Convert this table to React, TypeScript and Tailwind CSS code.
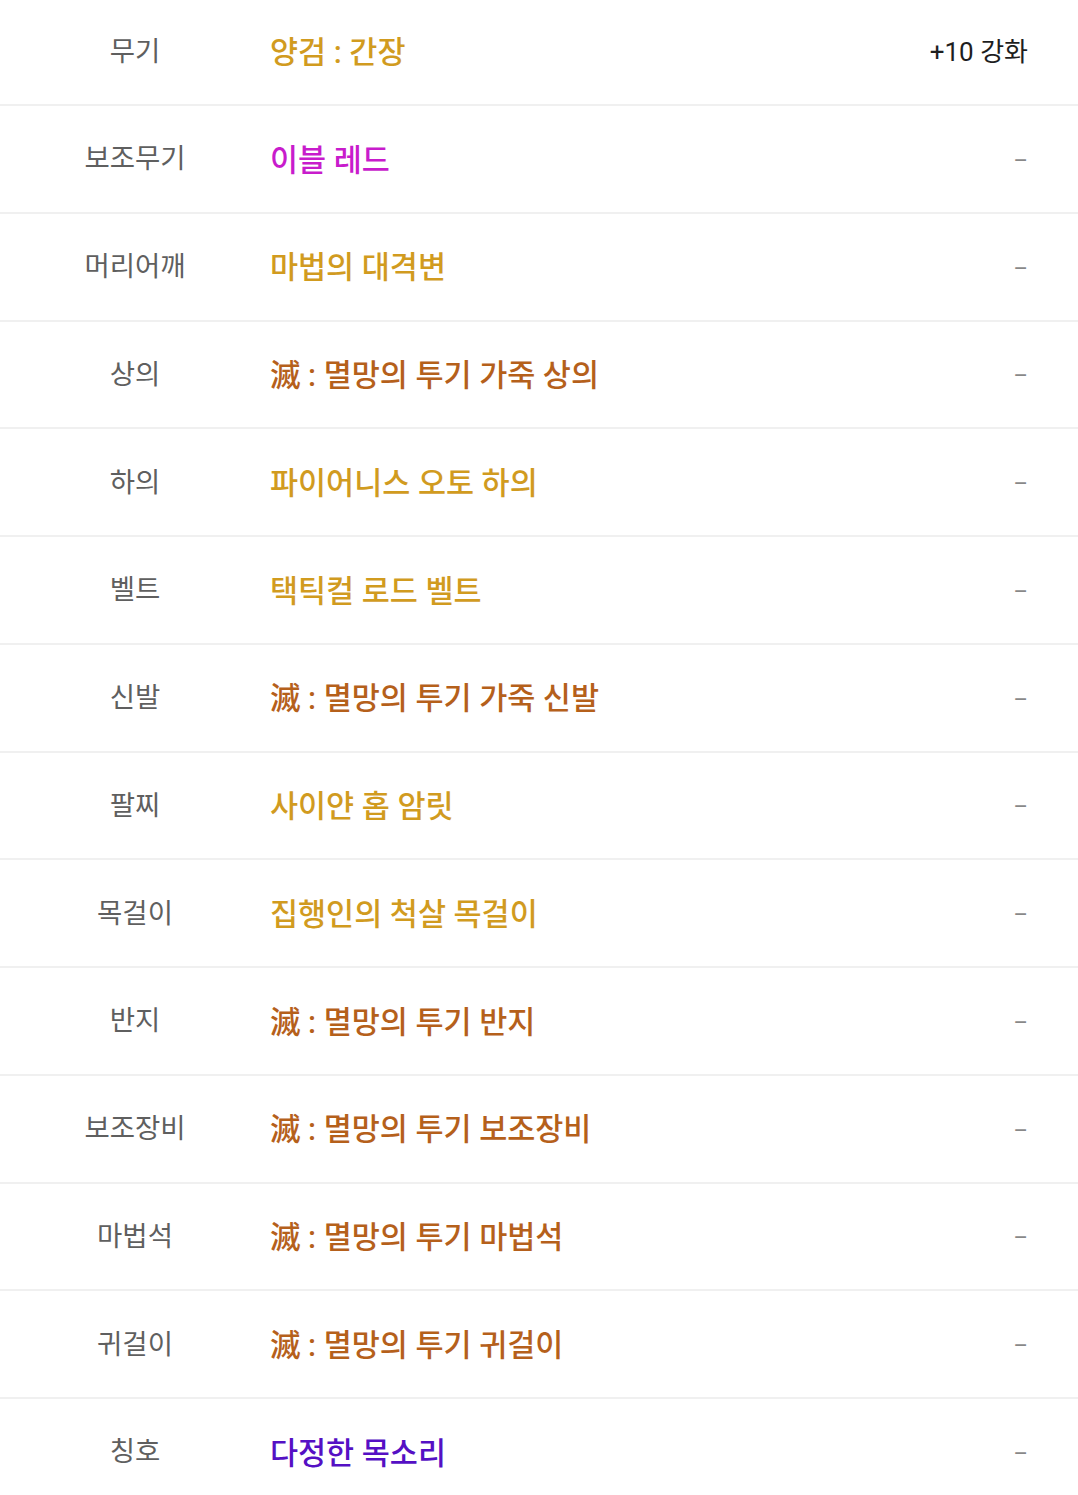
const rows: { label: string; name: string; color: string; extra: string }[] = [
  { label: '무기', name: '양검 : 간장', color: 'text-[#d19b1f]', extra: '+10 강화' },
  { label: '보조무기', name: '이블 레드', color: 'text-[#c81ccc]', extra: '' },
  { label: '머리어깨', name: '마법의 대격변', color: 'text-[#d19b1f]', extra: '' },
  { label: '상의', name: '滅 : 멸망의 투기 가죽 상의', color: 'text-[#b5601b]', extra: '' },
  { label: '하의', name: '파이어니스 오토 하의', color: 'text-[#d19b1f]', extra: '' },
  { label: '벨트', name: '택틱컬 로드 벨트', color: 'text-[#d19b1f]', extra: '' },
  { label: '신발', name: '滅 : 멸망의 투기 가죽 신발', color: 'text-[#b5601b]', extra: '' },
  { label: '팔찌', name: '사이얀 홉 암릿', color: 'text-[#d19b1f]', extra: '' },
  { label: '목걸이', name: '집행인의 척살 목걸이', color: 'text-[#d19b1f]', extra: '' },
  { label: '반지', name: '滅 : 멸망의 투기 반지', color: 'text-[#b5601b]', extra: '' },
  { label: '보조장비', name: '滅 : 멸망의 투기 보조장비', color: 'text-[#b5601b]', extra: '' },
  { label: '마법석', name: '滅 : 멸망의 투기 마법석', color: 'text-[#b5601b]', extra: '' },
  { label: '귀걸이', name: '滅 : 멸망의 투기 귀걸이', color: 'text-[#b5601b]', extra: '' },
  { label: '칭호', name: '다정한 목소리', color: 'text-[#5510c4]', extra: '' },
];

export default function App() {
  return (
    <div className="min-h-screen bg-white font-['Roboto','Noto_Sans_CJK_KR',sans-serif]">
      <div className="-mt-[1.75px]">
        {rows.map((row, index) => (
          <div
            key={index}
            className="flex h-[107.75px] items-center border-b-2 border-[#f0f0f0]"
          >
            <div className="w-[270px] shrink-0 text-center text-[27.5px] text-[#5f5f5f]">
              {row.label}
            </div>
            <div className={`flex-1 pt-[3px] text-[30.5px] font-medium ${row.color}`}>{row.name}</div>
            <div className="pr-[50px] pt-[3px] text-right">
              {row.extra ? (
                <span className="text-[26px] text-[#1e1e1e]">{row.extra}</span>
              ) : (
                <span className="text-[22px] text-[#888]">–</span>
              )}
            </div>
          </div>
        ))}
      </div>
    </div>
  );
}
